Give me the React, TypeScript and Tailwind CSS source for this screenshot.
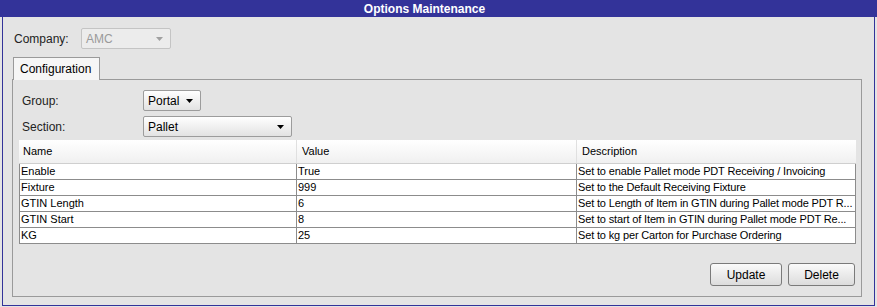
import React from "react";

const rows = [
  ["Enable", "True", "Set to enable Pallet mode PDT Receiving / Invoicing"],
  ["Fixture", "999", "Set to the Default Receiving Fixture"],
  ["GTIN Length", "6", "Set to Length of Item in GTIN during Pallet mode PDT R..."],
  ["GTIN Start", "8", "Set to start of Item in GTIN during Pallet mode PDT Re..."],
  ["KG", "25", "Set to kg per Carton for Purchase Ordering"],
];

function Arrow({ disabled }: { disabled?: boolean }) {
  return (
    <svg width="7" height="4" viewBox="0 0 7 4" className="shrink-0">
      <path d="M0 0 H7 L3.5 4 Z" fill={disabled ? "#a0a0a0" : "#000"} />
    </svg>
  );
}

function Select({ value, width, disabled }: { value: string; width: string; disabled?: boolean }) {
  return (
    <div
      className={`${width} h-[21px] flex items-center justify-between pl-[4px] pr-[7px] border rounded-[2px] text-[12px] ${
        disabled
          ? "border-[#c4c4c4] bg-[#ececec] text-[#9a9a9a]"
          : "border-[#9c9c9c] bg-gradient-to-b from-[#ffffff] to-[#e2e2e2] text-black"
      }`}
    >
      <span>{value}</span>
      <Arrow disabled={disabled} />
    </div>
  );
}

function Button({ label, width }: { label: string; width: string }) {
  return (
    <div
      className={`${width} h-[23px] flex items-center justify-center border border-[#7a7a7a] rounded-[3px] bg-gradient-to-b from-[#fafafa] to-[#dcdcdc] text-[12px] text-black`}
    >
      {label}
    </div>
  );
}

export default function App() {
  return (
    <div className="w-[877px] h-[307px] bg-[#e4e4e4] flex flex-col font-['Liberation_Sans',Arial,sans-serif] overflow-hidden">
      <div className="h-[17px] bg-[#333399] text-white font-bold text-[12px] flex items-center justify-center pr-[28px] shrink-0">
        Options Maintenance
      </div>
      <div className="flex-1 mx-[2px] mb-[1px] border-x border-b border-[#333399] flex flex-col pl-[9px] pr-[12px]">
        <div className="flex items-center mt-[11px] h-[21px]">
          <span className="text-[12px] text-[#222] w-[69px] pl-[2px]">Company:</span>
          <Select value="AMC" width="w-[90px]" disabled />
        </div>
        <div className="flex mt-[8px]">
          <div className="ml-[1px] w-[87px] h-[23px] border border-b-0 border-[#9a9a9a] bg-[#f6f6f6] text-[12px] flex items-center pl-[6px] relative z-10 -mb-px">
            Configuration
          </div>
        </div>
        <div className="h-[218px] border border-[#9a9a9a] bg-[#e4e4e4] flex flex-col pl-[6px] pr-[6px]">
          <div className="flex items-center mt-[10px]">
            <span className="text-[12px] text-[#222] w-[124px] pl-[3px]">Group:</span>
            <Select value="Portal" width="w-[58px]" />
          </div>
          <div className="flex items-center mt-[5px]">
            <span className="text-[12px] text-[#222] w-[124px] pl-[3px]">Section:</span>
            <Select value="Pallet" width="w-[149px]" />
          </div>
          <div className="mt-[3px] w-[837px] text-[11px] text-black bg-white">
            <div className="flex h-[24px] bg-gradient-to-b from-[#ffffff] to-[#f0f0f0] border-b border-[#cfcfcf]">
              <div className="w-[278px] pl-[4px] flex items-center border-r border-[#e0e0e0]">Name</div>
              <div className="w-[280px] pl-[5px] flex items-center border-r border-[#e0e0e0]">Value</div>
              <div className="flex-1 pl-[5px] flex items-center">Description</div>
            </div>
            {rows.map((r) => (
              <div key={r[0]} className="flex h-[16px] border-b border-[#8c8c8c]">
                <div className="w-[278px] pl-[1px] flex items-center border-l border-r border-[#8c8c8c] whitespace-nowrap overflow-hidden">{r[0]}</div>
                <div className="w-[280px] pl-[1px] flex items-center border-r border-[#8c8c8c] whitespace-nowrap overflow-hidden">{r[1]}</div>
                <div className="flex-1 pl-[1px] flex items-center border-r border-[#8c8c8c] whitespace-nowrap overflow-hidden tracking-[-0.15px]">{r[2]}</div>
              </div>
            ))}
          </div>
          <div className="flex justify-end mt-[19px] gap-[6px]">
            <Button label="Update" width="w-[72px]" />
            <Button label="Delete" width="w-[67px]" />
          </div>
        </div>
      </div>
    </div>
  );
}
